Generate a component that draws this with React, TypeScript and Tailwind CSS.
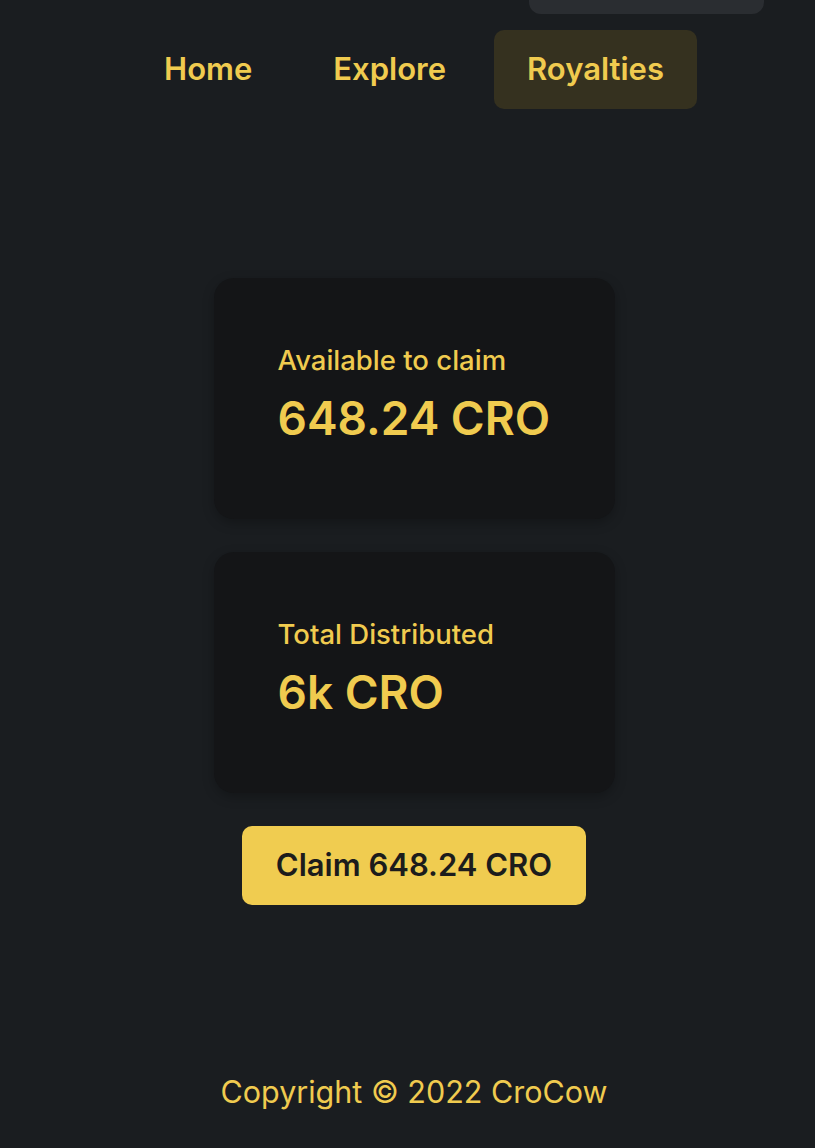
import React from "react";

const STATS = [
  { label: "Available to claim", value: "648.24 CRO" },
  { label: "Total Distributed", value: "6k CRO" },
];

const NAV = ["Home", "Explore", "Royalties"];

export default function App() {
  return (
    <div className="min-h-[1148px] w-full overflow-hidden bg-[#1a1d20] text-[#f0cb4f]" style={{ fontFamily: "Inter, 'Noto Sans', sans-serif" }}>
      <div className="w-[828px]">
        {/* top bar leftover */}
        <div className="flex justify-end pr-[64px]">
          <div className="h-[14px] w-[235px] rounded-b-[12px] bg-[#2a2d31]" />
        </div>

        {/* Nav */}
        <nav className="mt-[16px] flex justify-center gap-[15px]">
          {NAV.map((item) => (
            <div
              key={item}
              className={`flex h-[79px] items-center rounded-[10px] px-[33px] text-[31px] font-semibold ${
                item === "Royalties" ? "bg-[#35311f]" : ""
              }`}
            >
              {item}
            </div>
          ))}
        </nav>

        {/* Stats */}
        <div className="mt-[169px] flex flex-col items-center gap-[33px]">
          {STATS.map((s) => (
            <div key={s.label} className="flex h-[241px] w-[401px] flex-col justify-center rounded-[20px] bg-[#141517] pb-[6px] pl-[64px] shadow-[0_4px_12px_rgba(0,0,0,0.25)]">
              <div className="text-[27.5px] font-medium leading-tight">{s.label}</div>
              <div className="mt-[13px] text-[46px] font-semibold leading-tight">{s.value}</div>
            </div>
          ))}
          <button className="flex h-[79px] w-[344px] items-center justify-center rounded-[10px] bg-[#f0cc50] text-[31px] font-semibold text-[#1c1c1c]">
            Claim 648.24 CRO
          </button>
        </div>

        {/* Footer */}
        <footer className="mt-[164px] text-center text-[30.5px]">Copyright © 2022 CroCow</footer>
      </div>
    </div>
  );
}
